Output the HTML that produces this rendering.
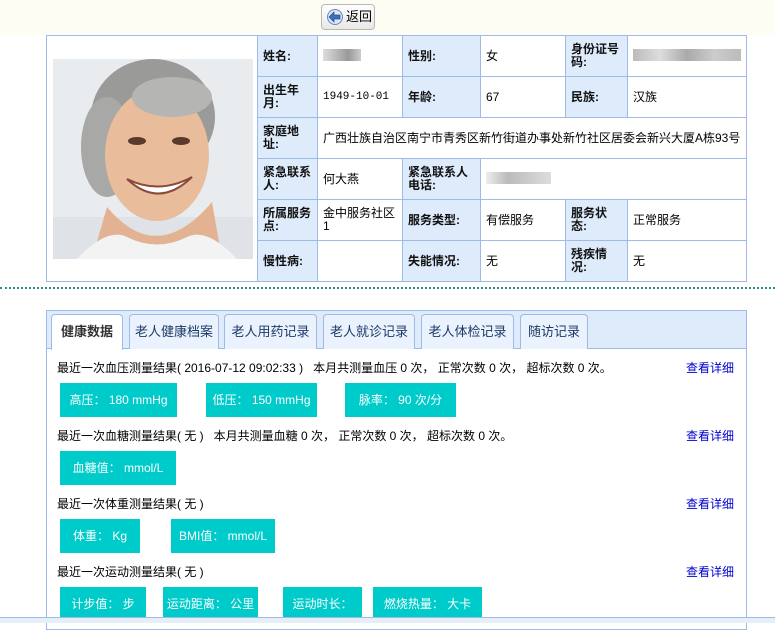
<!DOCTYPE html>
<html><head><meta charset="utf-8"><style>
*{margin:0;padding:0;box-sizing:border-box}
body{width:775px;height:623px;overflow:hidden;background:#fff;font-family:"Liberation Sans","Noto Sans CJK SC",sans-serif;font-size:12px;color:#000;position:relative}
.top{position:absolute;left:0;top:0;width:775px;height:35px;background:#fdfdf3}
.back{position:absolute;left:321px;top:4px;width:54px;height:26px;border:1px solid #b8b8b8;border-radius:4px;background:linear-gradient(#fff,#e8e8e8);font-size:13px;line-height:24px;padding-left:24px}
.back svg{position:absolute;left:4px;top:4px}
table{position:absolute;left:46px;top:35px;width:700px;border-collapse:collapse;table-layout:fixed}
td{border:1px solid #9dbbe6;height:41px;padding:0 5px;font-size:12px;line-height:13px;overflow:hidden}
tr{height:41px}
td.l{background:#deebfb;font-weight:bold;color:#111}
.photo{padding:0;background:#fff;vertical-align:middle}
.dash{position:absolute;left:0;top:287px;width:775px;border-top:2px dotted #2a8c8c}
.box{position:absolute;left:46px;top:310px;width:701px;height:320px;border:1px solid #9dbbe6}
.tabs{height:38px;background:#deebfb;border-bottom:1px solid #9dbbe6;position:relative}
.tab{position:absolute;top:3px;height:35px;border:1px solid #9dbbe6;border-bottom:none;border-radius:4px 4px 0 0;background:#eaf2fd;text-align:center;line-height:34px;font-size:13px;color:#1d3a66}
.tab.on{background:#fff;height:36px;font-weight:bold;color:#333}
.ln{position:absolute;left:57px;font-size:12px}
.lk{position:absolute;left:686px;font-size:12px;color:#00c}
.b{position:absolute;background:#00cbcb;color:#fff;height:34px;line-height:34px;text-align:center;font-size:12px}
.bot{position:absolute;left:0;top:617px;width:775px;height:6px;background:#e6eef8;border-top:1px solid #9dbbe6}
</style></head><body>
<div class="top"></div>
<div class="back"><svg width="18" height="16" viewBox="0 0 18 16"><circle cx="9" cy="8" r="7.5" fill="#dce6f5" stroke="#6b86b8"/><path d="M3 8 L8 3 V6 H14 V10 H8 V13 Z" fill="#3a6fc2" stroke="#2a4f90" stroke-width=".7"/></svg>返回</div>
<table>
<colgroup><col style="width:211px"><col style="width:60px"><col style="width:85px"><col style="width:78px"><col style="width:85px"><col style="width:62px"><col style="width:119px"></colgroup>
<tr><td class="photo" rowspan="6"><svg width="209" height="240" viewBox="0 0 209 240"><rect x="6" y="22" width="200" height="200" fill="#e9ecee"/><rect x="6" y="180" width="200" height="42" fill="#dfe3e8"/><ellipse cx="106" cy="80" rx="62" ry="58" fill="#9a9a98"/><ellipse cx="60" cy="110" rx="26" ry="50" fill="#a8a8a6"/><ellipse cx="110" cy="118" rx="52" ry="66" fill="#e9bc9c"/><path d="M60 170 Q110 230 165 165 L175 222 L45 222 Z" fill="#e2b293"/><path d="M30 222 Q60 190 80 200 Q110 215 140 200 Q160 190 190 222 Z" fill="#f3f3f3"/><path d="M80 142 Q112 172 145 140 Q112 158 80 142 Z" fill="#fff" stroke="#8a4a3a" stroke-width="2"/><ellipse cx="90" cy="104" rx="9" ry="4" fill="#5a3a2a"/><ellipse cx="134" cy="104" rx="9" ry="4" fill="#5a3a2a"/><ellipse cx="125" cy="60" rx="40" ry="20" fill="#b5b5b3"/></svg></td>
<td class="l">姓名:</td><td><span style="display:inline-block;width:38px;height:12px;background:linear-gradient(90deg,#ddd,#bbb,#999,#ccc)"></span></td><td class="l">性别:</td><td>女</td><td class="l">身份证号码:</td><td><span style="display:inline-block;width:108px;height:12px;background:linear-gradient(90deg,#bbb,#ddd,#aaa,#ccc,#bbb)"></span></td></tr>
<tr><td class="l">出生年月:</td><td style="font-family:'Liberation Mono',monospace;font-size:11px">1949-10-01</td><td class="l">年龄:</td><td>67</td><td class="l">民族:</td><td>汉族</td></tr>
<tr><td class="l">家庭地址:</td><td colspan="5">广西壮族自治区南宁市青秀区新竹街道办事处新竹社区居委会新兴大厦A栋93号</td></tr>
<tr><td class="l">紧急联系人:</td><td>何大燕</td><td class="l">紧急联系人电话:</td><td colspan="3"><span style="display:inline-block;width:65px;height:12px;background:linear-gradient(90deg,#eee,#bbb,#ccc,#ddd)"></span></td></tr>
<tr><td class="l">所属服务点:</td><td>金中服务社区1</td><td class="l">服务类型:</td><td>有偿服务</td><td class="l">服务状态:</td><td>正常服务</td></tr>
<tr><td class="l">慢性病:</td><td></td><td class="l">失能情况:</td><td>无</td><td class="l">残疾情况:</td><td>无</td></tr>
</table>
<div class="dash"></div>
<div class="box"><div class="tabs">
<div class="tab on" style="left:4px;width:72px">健康数据</div>
<div class="tab" style="left:82px;width:90px">老人健康档案</div>
<div class="tab" style="left:177px;width:93px">老人用药记录</div>
<div class="tab" style="left:276px;width:92px">老人就诊记录</div>
<div class="tab" style="left:374px;width:93px">老人体检记录</div>
<div class="tab" style="left:473px;width:68px">随访记录</div>
</div></div>
<div class="ln" style="top:359px">最近一次血压测量结果( 2016-07-12 09:02:33 ) &nbsp;&nbsp;本月共测量血压 0 次， 正常次数 0 次， 超标次数 0 次。</div><div class="lk" style="top:359px">查看详细</div>
<div class="b" style="left:60px;top:383px;width:117px">高压： 180 mmHg</div>
<div class="b" style="left:206px;top:383px;width:111px">低压： 150 mmHg</div>
<div class="b" style="left:345px;top:383px;width:111px">脉率： 90 次/分</div>
<div class="ln" style="top:427px">最近一次血糖测量结果( 无 ) &nbsp;&nbsp;本月共测量血糖 0 次， 正常次数 0 次， 超标次数 0 次。</div><div class="lk" style="top:427px">查看详细</div>
<div class="b" style="left:60px;top:451px;width:116px">血糖值： mmol/L</div>
<div class="ln" style="top:495px">最近一次体重测量结果( 无 )</div><div class="lk" style="top:495px">查看详细</div>
<div class="b" style="left:60px;top:519px;width:80px">体重： Kg</div>
<div class="b" style="left:171px;top:519px;width:104px">BMI值： mmol/L</div>
<div class="ln" style="top:563px">最近一次运动测量结果( 无 )</div><div class="lk" style="top:563px">查看详细</div>
<div class="b" style="left:60px;top:587px;width:86px">计步值： 步</div>
<div class="b" style="left:163px;top:587px;width:95px">运动距离： 公里</div>
<div class="b" style="left:283px;top:587px;width:79px">运动时长：</div>
<div class="b" style="left:373px;top:587px;width:109px">燃烧热量： 大卡</div>
<div class="bot"></div>
</body></html>
